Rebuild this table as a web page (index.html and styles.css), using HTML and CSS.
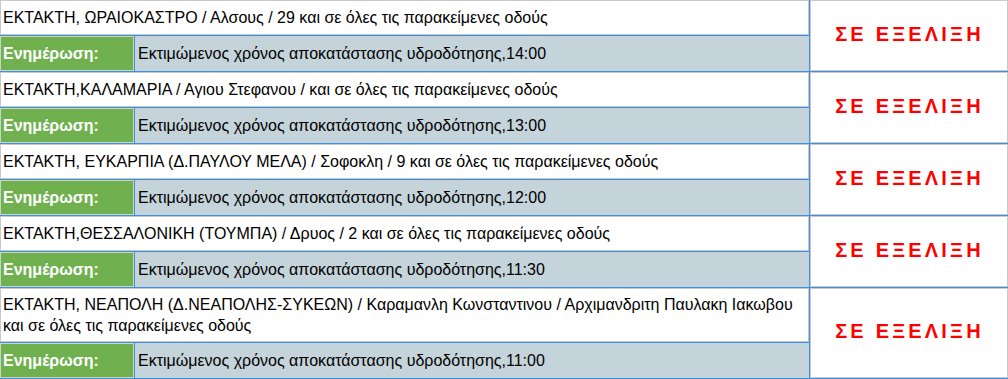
FILE: index.html
```html
<!DOCTYPE html>
<html lang="el">
<head>
<meta charset="utf-8">
<link rel="stylesheet" href="styles.css">
</head>
<body>
<div class="list">
  <div class="item">
    <div class="title">ΕΚΤΑΚΤΗ, ΩΡΑΙΟΚΑΣΤΡΟ / Αλσους / 29 και σε όλες τις παρακείμενες οδούς</div>
    <div class="status">ΣΕ ΕΞΕΛΙΞΗ</div>
    <div class="label">Ενημέρωση:</div>
    <div class="info">Εκτιμώμενος χρόνος αποκατάστασης υδροδότησης,14:00</div>
  </div>
  <div class="item">
    <div class="title">ΕΚΤΑΚΤΗ,ΚΑΛΑΜΑΡΙΑ / Αγιου Στεφανου / και σε όλες τις παρακείμενες οδούς</div>
    <div class="status">ΣΕ ΕΞΕΛΙΞΗ</div>
    <div class="label">Ενημέρωση:</div>
    <div class="info">Εκτιμώμενος χρόνος αποκατάστασης υδροδότησης,13:00</div>
  </div>
  <div class="item">
    <div class="title">ΕΚΤΑΚΤΗ, ΕΥΚΑΡΠΙΑ (Δ.ΠΑΥΛΟΥ ΜΕΛΑ) / Σοφοκλη / 9 και σε όλες τις παρακείμενες οδούς</div>
    <div class="status">ΣΕ ΕΞΕΛΙΞΗ</div>
    <div class="label">Ενημέρωση:</div>
    <div class="info">Εκτιμώμενος χρόνος αποκατάστασης υδροδότησης,12:00</div>
  </div>
  <div class="item">
    <div class="title">ΕΚΤΑΚΤΗ,ΘΕΣΣΑΛΟΝΙΚΗ (ΤΟΥΜΠΑ) / Δρυος / 2 και σε όλες τις παρακείμενες οδούς</div>
    <div class="status">ΣΕ ΕΞΕΛΙΞΗ</div>
    <div class="label">Ενημέρωση:</div>
    <div class="info">Εκτιμώμενος χρόνος αποκατάστασης υδροδότησης,11:30</div>
  </div>
  <div class="item">
    <div class="title">ΕΚΤΑΚΤΗ, ΝΕΑΠΟΛΗ (Δ.ΝΕΑΠΟΛΗΣ-ΣΥΚΕΩΝ) / Καραμανλη Κωνσταντινου / Αρχιμανδριτη Παυλακη Ιακωβου και σε όλες τις παρακείμενες οδούς</div>
    <div class="status">ΣΕ ΕΞΕΛΙΞΗ</div>
    <div class="label">Ενημέρωση:</div>
    <div class="info">Εκτιμώμενος χρόνος αποκατάστασης υδροδότησης,11:00</div>
  </div>
</div>
</body>
</html>
```

FILE: styles.css
```css
html, body {
  margin: 0;
  padding: 0;
  background: #ffffff;
}

body {
  font-family: "Liberation Sans", Arial, sans-serif;
  font-size: 16px;
  color: #000000;
}

.list {
  display: flex;
  flex-direction: column;
  gap: 1px;
  padding-bottom: 1px;
  background: #3d8fe3;
}

.item {
  display: grid;
  grid-template-columns: 134px 674px 198px;
  grid-template-rows: auto 35px;
  column-gap: 1px;
  row-gap: 1px;
  background: #3d8fe3;
}

.title {
  grid-column: 1 / 3;
  grid-row: 1;
  box-sizing: border-box;
  min-height: 35px;
  padding: 5px 2px;
  line-height: 21px;
  background: #ffffff;
  border: 1px solid #c9c9c9;
  display: flex;
  align-items: center;
}

.status {
  grid-column: 3;
  grid-row: 1 / 3;
  background: #ffffff;
  border: 1px solid #c9c9c9;
  display: flex;
  align-items: center;
  justify-content: center;
  color: #ff0000;
  font-weight: bold;
  font-size: 20px;
  letter-spacing: 3.2px;
  padding-left: 1px;
  padding-bottom: 3px;
}

.label {
  grid-column: 1;
  grid-row: 2;
  box-sizing: border-box;
  background: #70b04f;
  border: 1px solid #c9d6c0;
  color: #ffffff;
  font-weight: bold;
  display: flex;
  align-items: center;
  padding-left: 2px;
}

.info {
  grid-column: 2;
  grid-row: 2;
  box-sizing: border-box;
  background: #c5d4da;
  border: 1px solid #c5d4da;
  display: flex;
  align-items: center;
  padding-left: 2px;
}
```
